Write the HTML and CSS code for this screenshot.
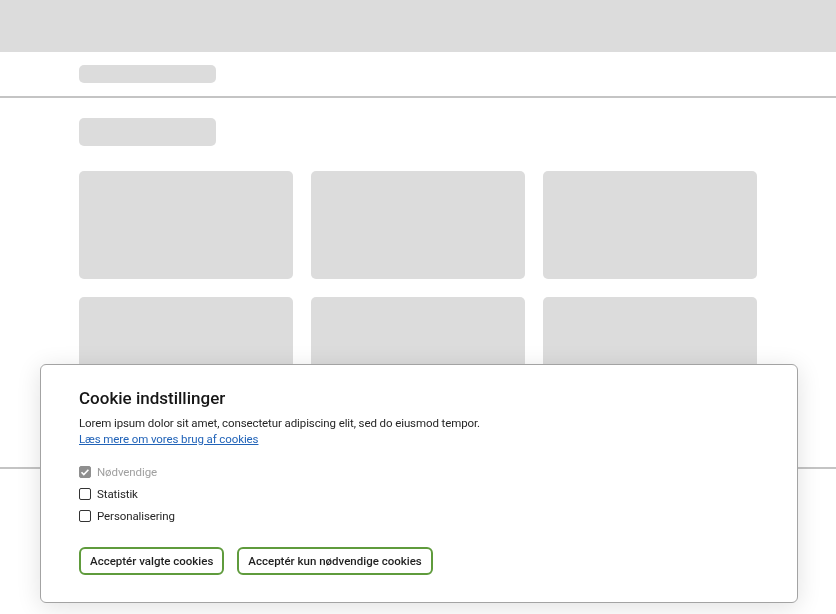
FILE: index.html
```html
<!DOCTYPE html>
<html lang="da">

<head>
    <meta charset="UTF-8">
    <meta name="viewport" content="width=device-width, initial-scale=1.0">
    <title>Cookie indstillinger</title>
    <link rel="stylesheet" href="styles.css">
</head>

<body>
    <header class="topbar"></header>
    <nav class="subnav">
        <div class="wrap">
            <div class="skeleton skeleton-nav"></div>
        </div>
    </nav>
    <main class="wrap page">
        <div class="skeleton skeleton-title"></div>
        <div class="cards">
            <div class="skeleton card"></div>
            <div class="skeleton card"></div>
            <div class="skeleton card"></div>
            <div class="skeleton card"></div>
            <div class="skeleton card"></div>
            <div class="skeleton card"></div>
        </div>
    </main>
    <footer class="footer"></footer>

    <div class="cookie-dialog" role="dialog" aria-labelledby="cookieTitle">
        <h2 id="cookieTitle">Cookie indstillinger</h2>
        <p class="cookie-text">Lorem ipsum dolor sit amet, consectetur adipiscing elit, sed do eiusmod tempor.</p>
        <a class="cookie-link" href="#">Læs mere om vores brug af cookies</a>
        <div class="cookie-options">
            <label class="option disabled"><input type="checkbox" checked disabled> Nødvendige</label>
            <label class="option"><input type="checkbox"> Statistik</label>
            <label class="option"><input type="checkbox"> Personalisering</label>
        </div>
        <div class="cookie-actions">
            <button class="btn">Acceptér valgte cookies</button>
            <button class="btn">Acceptér kun nødvendige cookies</button>
        </div>
    </div>
</body>

</html>
```

FILE: styles.css
```css
body {
    margin: 0;
    font-family: Roboto, "Liberation Sans", sans-serif;
    color: #1f1f1f;
    background-color: white;
}

.topbar {
    height: 52px;
    background-color: #dcdcdc;
}

.wrap {
    width: 678px;
    margin: 0 auto;
}

.subnav {
    height: 44px;
    border-bottom: 2px solid #c4c4c4;
    display: flex;
    align-items: center;
}

.skeleton {
    background-color: #dcdcdc;
    border-radius: 5px;
}

.skeleton-nav {
    width: 137px;
    height: 18px;
}

.page {
    padding-top: 20px;
}

.skeleton-title {
    width: 137px;
    height: 28px;
    margin-bottom: 25px;
}

.cards {
    display: grid;
    grid-template-columns: repeat(3, 1fr);
    column-gap: 18px;
    row-gap: 18px;
}

.card {
    height: 108px;
}

.footer {
    margin-top: 62px;
    border-top: 2px solid #c4c4c4;
    height: 140px;
}

.cookie-dialog {
    position: fixed;
    left: 40px;
    top: 364px;
    width: 758px;
    box-sizing: border-box;
    padding: 21px 38px 27px;
    background-color: white;
    border: 1px solid #a3a3a3;
    border-radius: 6px;
    box-shadow: 0 4px 24px rgba(0, 0, 0, 0.12);
}

.cookie-dialog h2 {
    margin: 0 0 5px;
    font-size: 17px;
    font-weight: 500;
    line-height: 24px;
    color: #161616;
}

.cookie-text {
    margin: 0;
    font-size: 11.5px;
    letter-spacing: -0.1px;
    line-height: 16px;
    color: #262626;
}

.cookie-link {
    display: block;
    width: fit-content;
    font-size: 11.5px;
    letter-spacing: -0.1px;
    line-height: 16px;
    color: #2163b8;
}

.cookie-options {
    display: flex;
    flex-direction: column;
    gap: 6px;
    margin-top: 17px;
}

.option {
    display: flex;
    align-items: center;
    gap: 6px;
    font-size: 11.5px;
    letter-spacing: -0.1px;
    line-height: 16px;
    color: #262626;
}

.option input {
    appearance: none;
    margin: 0;
    width: 12px;
    height: 12px;
    box-sizing: border-box;
    border: 1.5px solid #333;
    border-radius: 2px;
    background-color: white;
}

.option input:checked {
    border-color: #8f8f8f;
    background: #8f8f8f url("data:image/svg+xml,%3Csvg xmlns='http://www.w3.org/2000/svg' viewBox='0 0 12 12'%3E%3Cpath d='M2.5 6.2l2.3 2.3 4.6-4.8' fill='none' stroke='white' stroke-width='1.6'/%3E%3C/svg%3E") center / 12px no-repeat;
}

.option.disabled {
    color: #a0a0a0;
}

.cookie-actions {
    display: flex;
    gap: 13px;
    margin-top: 23px;
}

.btn {
    font-family: inherit;
    font-size: 11.5px;
    font-weight: 500;
    color: #1f1f1f;
    background-color: white;
    border: 2px solid #5f9b3c;
    border-radius: 6px;
    height: 28px;
    padding: 0 9px;
    cursor: pointer;
}
```
